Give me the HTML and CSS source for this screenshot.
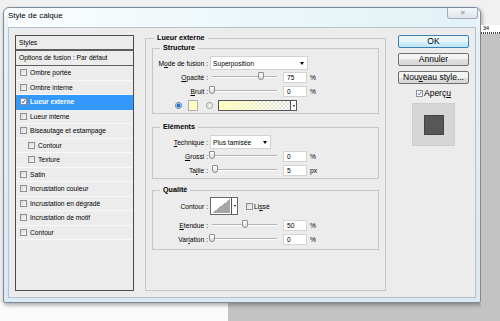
FILE: index.html
```html
<!DOCTYPE html>
<html lang="fr">
<head>
  <meta charset="UTF-8">
  <title>Style de calque</title>
  <link rel="stylesheet" href="styles.css">
</head>
<body>
  <div class="dialog">
    <div class="titlebar">
      <span class="title">Style de calque</span>
      <span class="close">✕</span>
    </div>
    <div class="client">
      <!-- Styles list -->
      <div class="styles">
        <div class="styles-head">Styles</div>
        <div class="styles-opt">Options de fusion : Par défaut</div>
        <div class="row"><span class="cb"></span>Ombre portée</div>
        <div class="row"><span class="cb"></span>Ombre interne</div>
        <div class="row selected"><span class="cb on"><svg viewBox="0 0 7 7"><polyline points="1,3.5 2.8,5.5 6,0.8" fill="none" stroke="#1d3c8f" stroke-width="1.2"/></svg></span>Lueur externe</div>
        <div class="row"><span class="cb"></span>Lueur interne</div>
        <div class="row"><span class="cb"></span>Biseautage et estampage</div>
        <div class="row sub"><span class="cb"></span>Contour</div>
        <div class="row sub"><span class="cb"></span>Texture</div>
        <div class="row"><span class="cb"></span>Satin</div>
        <div class="row"><span class="cb"></span>Incrustation couleur</div>
        <div class="row"><span class="cb"></span>Incrustation en dégradé</div>
        <div class="row"><span class="cb"></span>Incrustation de motif</div>
        <div class="row"><span class="cb"></span>Contour</div>
      </div>

      <!-- Outer glow settings -->
      <fieldset class="group">
        <legend>Lueur externe</legend>

        <fieldset class="sub-group structure">
          <legend>Structure</legend>
          <div class="field">
            <label>M<u>o</u>de de fusion :</label>
            <div class="select blend">Superposition<span class="arrow"></span></div>
          </div>
          <div class="field">
            <label><u>O</u>pacité :</label>
            <div class="slider"><span class="thumb" style="left: 75%"></span></div>
            <span class="num">75</span><span class="unit">%</span>
          </div>
          <div class="field">
            <label><u>B</u>ruit :</label>
            <div class="slider"><span class="thumb" style="left: 0%"></span></div>
            <span class="num">0</span><span class="unit">%</span>
          </div>
          <div class="colors">
            <span class="radio on"></span>
            <span class="swatch"></span>
            <span class="radio"></span>
            <span class="gradient"><span class="ramp"></span><span class="drop"><span class="arrow"></span></span></span>
          </div>
        </fieldset>

        <fieldset class="sub-group elements">
          <legend>Eléments</legend>
          <div class="field">
            <label><u>T</u>echnique :</label>
            <div class="select technique">Plus tamisée<span class="arrow"></span></div>
          </div>
          <div class="field">
            <label><u>G</u>rossi :</label>
            <div class="slider"><span class="thumb" style="left: 0%"></span></div>
            <span class="num">0</span><span class="unit">%</span>
          </div>
          <div class="field">
            <label>Ta<u>i</u>lle :</label>
            <div class="slider"><span class="thumb" style="left: 5%"></span></div>
            <span class="num">5</span><span class="unit">px</span>
          </div>
        </fieldset>

        <fieldset class="sub-group quality">
          <legend>Qualité</legend>
          <div class="field contour-row">
            <label>Contour :</label>
            <span class="contour"><span class="curve"></span><span class="drop"><span class="arrow"></span></span></span>
            <span class="cb lisse"></span><span class="check-label">Li<u>s</u>sé</span>
          </div>
          <div class="field">
            <label><u>E</u>tendue :</label>
            <div class="slider"><span class="thumb" style="left: 50%"></span></div>
            <span class="num">50</span><span class="unit">%</span>
          </div>
          <div class="field">
            <label>Var<u>i</u>ation :</label>
            <div class="slider"><span class="thumb" style="left: 0%"></span></div>
            <span class="num">0</span><span class="unit">%</span>
          </div>
        </fieldset>
      </fieldset>

      <!-- Buttons and preview -->
      <div class="side">
        <div class="btn default">OK</div>
        <div class="btn">Annuler</div>
        <div class="btn">Nou<u>v</u>eau style...</div>
        <div class="preview-toggle">
          <span class="cb on"><svg viewBox="0 0 7 7"><polyline points="1,3.5 2.8,5.5 6,0.8" fill="none" stroke="#2456c8" stroke-width="1.2"/></svg></span>
          <span>Aperç<u>u</u></span>
        </div>
        <div class="preview"><span class="preview-square"></span></div>
      </div>
    </div>
  </div>

  <div class="desk-side">
    <div class="ruler">34</div>
    <div class="shelf"></div>
  </div>
</body>
</html>
```

FILE: styles.css
```css
body {
  margin: 0;
  width: 500px;
  height: 321px;
  overflow: hidden;
  display: flex;
  align-items: flex-start;
  font-family: "Liberation Sans", Arial, sans-serif;
  color: #000;
  background:
    linear-gradient(#c3c3c3, #c3c3c3) 228px 303px / 272px 18px no-repeat,
    linear-gradient(#fafafa, #fafafa) 0 303px / 228px 18px no-repeat,
    #f1f1f1;
}
.dialog {
  margin: 7px 0 0 3px;
  width: 478px;
  height: 296px;
  box-sizing: border-box;
  border: 1px solid #7c8a9a;
  border-radius: 6px 6px 2px 2px;
  padding: 0 4px 4px 4px;
  background: linear-gradient(#f7fbfd, #e6f1f7 22px, #dce8f2);
  box-shadow: 1px 2px 4px rgba(0, 0, 0, 0.35);
  display: flex;
  flex-direction: column;
}
.titlebar {
  height: 19px;
  display: flex;
  justify-content: space-between;
  align-items: flex-start;
  background: linear-gradient(90deg, #fbfdfe, #eaf6f9 60%, #e2f2f6);
}
.title {
  font-size: 8px;
  line-height: 16px;
}
.close {
  width: 31px;
  height: 11px;
  margin-right: -2px;
  box-sizing: border-box;
  border: 1px solid #a3adba;
  border-top: none;
  border-radius: 0 0 3px 3px;
  background: linear-gradient(#f6f8fa, #dfe5eb);
  color: #8a939e;
  font-size: 7px;
  line-height: 10px;
  text-align: center;
}
.client {
  flex: 1;
  border: 1px solid #b4c2cf;
  background: #ececec;
  padding: 5px 0 0 6px;
  display: flex;
  align-items: flex-start;
  font-size: 6.7px;
}

/* Styles list */
.styles {
  margin-top: 2px;
  width: 119px;
  height: 256px;
  box-sizing: border-box;
  border: 1px solid #4d4d4d;
  background: #ececec;
}
.styles-head {
  height: 13px;
  line-height: 13px;
  padding-left: 3px;
  border-bottom: 2px solid #5c5c5c;
}
.styles-opt {
  height: 14px;
  line-height: 14px;
  padding-left: 3px;
  border-bottom: 1px solid #5c5c5c;
}
.row {
  height: 14.5px;
  box-sizing: border-box;
  border-bottom: 1px solid #f8f8f8;
  padding-left: 4px;
  display: flex;
  align-items: center;
  gap: 3px;
}
.row.sub {
  padding-left: 12px;
}
.row.selected {
  background: #3399ff;
  color: #fff;
  font-weight: bold;
  border-bottom-color: #3399ff;
}
.cb {
  width: 7px;
  height: 7px;
  flex: none;
  box-sizing: border-box;
  border: 1px solid #8f8f8f;
  background: linear-gradient(135deg, #d8d8d8, #fafafa);
  display: flex;
}
.cb.on {
  background: #fff;
}
.cb svg {
  width: 100%;
  height: 100%;
}

/* Group boxes */
fieldset {
  margin: 0;
  min-width: 0;
  box-sizing: border-box;
  border: 1px solid #c6c6c6;
}
legend {
  font-weight: bold;
  font-size: 7.2px;
  line-height: 10px;
  padding: 0 3px;
}
.group {
  margin-left: 11px;
  width: 241px;
  height: 258px;
  padding: 0 6px;
}
.group > legend {
  margin-left: 2px;
}
.sub-group {
  width: 227px;
  padding: 0;
}
.sub-group > legend {
  margin-left: 7px;
}
.structure {
  padding: 3px 0 2px;
}
.elements {
  margin-top: 8px;
  padding: 3px 0 1px;
}
.quality {
  margin-top: 6px;
  padding: 2px 0 3px;
}
.field {
  height: 14px;
  display: flex;
  align-items: center;
}
.field label {
  width: 55px;
  flex: none;
  margin-right: 2px;
  text-align: right;
}
.select {
  height: 14px;
  box-sizing: border-box;
  border: 1px solid #d2d2d2;
  background: #fff;
  padding: 0 3px 0 2px;
  display: flex;
  align-items: center;
  justify-content: space-between;
}
.select.blend {
  width: 98px;
}
.select.technique {
  width: 61px;
}
.arrow {
  width: 0;
  height: 0;
  border-left: 2.5px solid transparent;
  border-right: 2.5px solid transparent;
  border-top: 3px solid #000;
}
.slider {
  position: relative;
  width: 65px;
  height: 1px;
  margin: 0 6px 0 2px;
  background: #b3b3b3;
  border-bottom: 1px solid #fff;
}
.thumb {
  position: absolute;
  top: -4px;
  width: 6px;
  height: 8px;
  margin-left: -3px;
  box-sizing: border-box;
  border: 1px solid #8c8c8c;
  border-radius: 1px 1px 3px 3px;
  background: linear-gradient(#fff, #dcdcdc);
}
.num {
  width: 24px;
  height: 11px;
  box-sizing: border-box;
  border: 1px solid #d4d4d4;
  background: #fff;
  padding-left: 3px;
  line-height: 9px;
  margin-right: 3px;
}

/* Colour choice */
.colors {
  height: 11px;
  margin-top: 2px;
  display: flex;
  align-items: center;
}
.radio {
  width: 7px;
  height: 7px;
  box-sizing: border-box;
  border: 1px solid #9a9a9a;
  border-radius: 50%;
  background: linear-gradient(135deg, #dedede, #fff);
  margin-left: 8px;
}
.radio.on {
  margin-left: 22px;
  background: radial-gradient(circle, #1f6fd8 1.6px, #bfe0f7 2.2px, #f4f9fd 3px);
  border-color: #5c7da0;
}
.swatch {
  width: 10px;
  height: 11px;
  box-sizing: border-box;
  border: 1px solid #b0b0b0;
  background: #ffffc0;
  margin-left: 6px;
}
.gradient {
  width: 79px;
  height: 11px;
  box-sizing: border-box;
  border: 1px solid #555;
  margin-left: 5px;
  display: flex;
}
.ramp {
  flex: 1;
  background:
    linear-gradient(90deg, #ffffc0, rgba(255, 255, 192, 0)),
    repeating-conic-gradient(#dcdcdc 0 25%, #fff 0 50%) 0 0 / 4px 4px;
}
.drop {
  width: 5px;
  border-left: 1px solid #555;
  background: #fff;
  display: flex;
  align-items: center;
  justify-content: center;
}
.drop .arrow {
  border-left-width: 1.5px;
  border-right-width: 1.5px;
  border-top-width: 2px;
}

/* Contour */
.contour-row {
  height: 18px;
  margin-bottom: 3px;
}
.contour {
  width: 28px;
  height: 18px;
  box-sizing: border-box;
  border: 1px solid #666;
  display: flex;
}
.curve {
  flex: 1;
  border: 1px solid #fff;
  background: linear-gradient(to top left, #a6a6a6 50%, #fff 50%);
}
.cb.lisse {
  margin-left: 8px;
  margin-right: 1px;
}

/* Right column */
.side {
  margin: 2px 0 0 12px;
  width: 71px;
  display: flex;
  flex-direction: column;
}
.btn {
  height: 13px;
  box-sizing: border-box;
  border: 1px solid #707070;
  border-radius: 2px;
  background: linear-gradient(#f4f4f4 50%, #e2e2e2 50%, #d6d6d6);
  font-size: 8.5px;
  line-height: 11px;
  text-align: center;
}
.btn + .btn {
  margin-top: 5px;
}
.btn.default {
  border-color: #3c7fb1;
  background: linear-gradient(#eaf6fd 50%, #d3eefc 50%, #bfe6fa);
}
.preview-toggle {
  margin-top: 3px;
  height: 12px;
  padding-left: 18px;
  display: flex;
  align-items: center;
  gap: 1px;
  font-size: 8.5px;
}
.preview {
  margin: 4px 0 0 14px;
  width: 43px;
  height: 43px;
  box-sizing: border-box;
  border: 1px solid #cecece;
  background: #d6d6d6;
  display: flex;
  align-items: center;
  justify-content: center;
}
.preview-square {
  width: 20px;
  height: 20px;
  box-sizing: border-box;
  border: 1px solid #444;
  background: #575757;
}

/* Desktop beside the dialog */
.desk-side {
  margin-top: 25px;
  flex: 1;
  height: 296px;
  display: flex;
  flex-direction: column;
}
.ruler {
  height: 9px;
  padding-left: 2px;
  font-size: 5.5px;
  line-height: 6px;
  background: repeating-linear-gradient(90deg, #444 0 1px, transparent 1px 2px) 0 100% / 100% 2px no-repeat, #fff;
}
.shelf {
  flex: 1;
  background: #c3c3c3;
}
```
